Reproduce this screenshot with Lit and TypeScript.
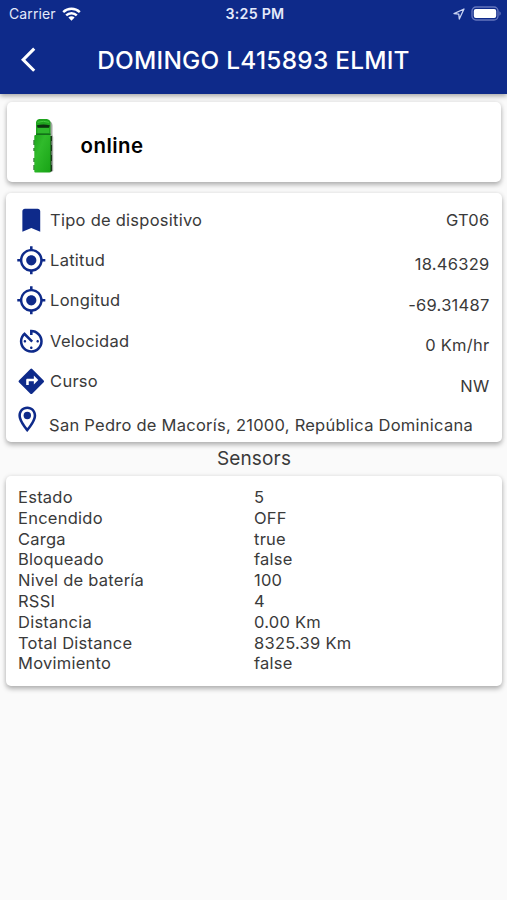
import { LitElement, html, css, svg, nothing } from "lit";
import { customElement, property } from "lit/decorators.js";

const ICONS: Record<string, string> = {
  back: "M11.67 3.87 9.9 2.1 0 12l9.9 9.9 1.77-1.77L3.54 12z",
  bookmark: "M17 3H7c-1.1 0-2 .9-2 2v16l7-3 7 3V5c0-1.1-.9-2-2-2z",
  gps: "M12 8c-2.21 0-4 1.79-4 4s1.79 4 4 4 4-1.79 4-4-1.79-4-4-4zm8.94 3A8.994 8.994 0 0 0 13 3.06V1h-2v2.06A8.994 8.994 0 0 0 3.06 11H1v2h2.06A8.994 8.994 0 0 0 11 20.94V23h2v-2.06A8.994 8.994 0 0 0 20.94 13H23v-2h-2.06zM12 19c-3.87 0-7-3.13-7-7s3.13-7 7-7 7 3.13 7 7-3.13 7-7 7z",
  timer: "M11 17c0 .55.45 1 1 1s1-.45 1-1-.45-1-1-1-1 .45-1 1zm0-14v4h2V5.08c3.39.49 6 3.39 6 6.92 0 3.87-3.13 7-7 7s-7-3.13-7-7c0-1.68.59-3.22 1.58-4.42L12 13l1.41-1.41-6.8-6.8v.02C4.42 6.45 3 9.05 3 12c0 4.97 4.02 9 9 9a9 9 0 0 0 0-18h-1zm7 9c0-.55-.45-1-1-1s-1 .45-1 1 .45 1 1 1 1-.45 1-1zM6 12c0 .55.45 1 1 1s1-.45 1-1-.45-1-1-1-1 .45-1 1z",
  directions: "M21.71 11.29l-9-9a.996.996 0 0 0-1.41 0l-9 9a.996.996 0 0 0 0 1.41l9 9c.39.39 1.02.39 1.41 0l9-9a.996.996 0 0 0 0-1.41zM14 14.5V12h-4v3H8v-4c0-.55.45-1 1-1h5V7.5l3.5 3.5-3.5 3.5z",
  place: "M12 2C8.13 2 5 5.13 5 9c0 5.25 7 13 7 13s7-7.75 7-13c0-3.87-3.13-7-7-7zM7 9c0-2.76 2.24-5 5-5s5 2.24 5 5c0 2.88-2.88 7.19-5 9.88C9.92 16.21 7 11.85 7 9z",
};

@customElement("app-icon")
class AppIcon extends LitElement {
  @property() name = "";
  static styles = css`
    :host { display: block; flex: none; width: 30.6px; height: 30.6px; }
    svg { display: block; width: 100%; height: 100%; fill: currentColor; }
  `;
  render() {
    return html`<svg viewBox="0 0 24 24">
      <path d=${ICONS[this.name]}></path>
      ${this.name === "place" ? svg`<circle cx="12" cy="9" r="2.9"></circle>` : nothing}
    </svg>`;
  }
}

@customElement("status-bar")
class StatusBar extends LitElement {
  static styles = css`
    :host { display: grid; grid-template-columns: 1fr auto 1fr; align-items: center; height: 27px; padding: 0 6px 0 9px; color: #e4e9fa; font-size: 14px; letter-spacing: 0.1px; }
    .left, .right { display: flex; align-items: center; }
    .left { gap: 6px; }
    .right { justify-content: flex-end; gap: 6px; }
    .time { font-size: 14.2px; font-weight: 600; letter-spacing: 0.25px; }
    svg { display: block; }
  `;
  render() {
    return html`
      <div class="left">
        <span>Carrier</span>
        <svg width="19" height="14" viewBox="0 0 19 14" fill="none" stroke="#fff" stroke-width="2.4">
          <path d="M1.2 5.2a11.8 11.8 0 0 1 16.6 0"></path>
          <path d="M4.2 8.4a7.5 7.5 0 0 1 10.6 0"></path>
          <path d="M9.5 13.7 6.4 10.5a4.4 4.4 0 0 1 6.2 0z" fill="#fff" stroke="none"></path>
        </svg>
      </div>
      <span class="time">3:25 PM</span>
      <div class="right">
        <svg width="12" height="12" viewBox="0 0 12 12" fill="none" stroke="#c9d3f3" stroke-width="1.3" stroke-linejoin="round">
          <path d="M11 1 1 5.6l4.8.6.5 4.8z"></path>
        </svg>
        <svg width="30" height="15" viewBox="0 0 30 15">
          <rect x="1" y="1" width="26" height="13" rx="4" fill="none" stroke="#6475bd" stroke-width="1.3"></rect>
          <rect x="2.8" y="2.9" width="22.4" height="9.2" rx="2" fill="#fff"></rect>
          <path d="M28.4 5.3c1.8.8 1.8 3.6 0 4.4z" fill="#6475bd"></path>
        </svg>
      </div>`;
  }
}

@customElement("truck-picture")
class TruckPicture extends LitElement {
  static styles = css`
    :host, svg { display: block; }
  `;
  render() {
    return html`<svg width="24" height="56" viewBox="0 0 24 56">
      <defs>
        <linearGradient id="g" x1="0" y1="0" x2="1" y2="1">
          <stop offset="0" stop-color="#1fa51d"></stop><stop offset=".35" stop-color="#30bb2b"></stop><stop offset="1" stop-color="#18a316"></stop>
        </linearGradient>
      </defs>
      <path d="M17 2.5q4.5 1 4.5 5V17l.7 2v34l-3 1.5z" fill="#a3a9a3"></path>
      <path d="M19 18h2v5h-.5v4h.5v6h-.5v4h.5v6h-.5v4h.5v6l-2 1z" fill="#183a18"></path>
      <path d="M2.3 22h2v5h-2zM2.3 30h2v3h-2zM2.3 40h2v4h-2zM2.3 47h2v5h-2z" fill="#3f7545"></path>
      <path d="M5 4Q5.500 1.500 8 1h8Q19 1.500 19.500 4v13.500H5z" fill="#1fa31e"></path>
      <path d="M5.800 7.300q6.500-1.500 13 0l-.8 2.400H6.600z" fill="#0c3010"></path>
      <path d="M6.500 4.300q6-2 11.500 0" stroke="#43c83d" fill="none"></path>
      <path d="M6.500 10h11.500v5H6.500z" fill="#2fb82c"></path>
      <path d="M5 15.500h14.500v1.500H5z" fill="#14701a"></path>
      <rect x="3.300" y="17" width="16.200" height="37.500" rx="1" fill="url(#g)"></rect>
    </svg>`;
  }
}

const DETAILS = [
  ["bookmark", "Tipo de dispositivo", "GT06", "type"],
  ["gps", "Latitud", "18.46329", ""],
  ["gps", "Longitud", "-69.31487", ""],
  ["timer", "Velocidad", "0 Km/hr", ""],
  ["directions", "Curso", "NW", ""],
];

const SENSORS = [
  ["Estado", "5"],
  ["Encendido", "OFF"],
  ["Carga", "true"],
  ["Bloqueado", "false"],
  ["Nivel de batería", "100"],
  ["RSSI", "4"],
  ["Distancia", "0.00 Km"],
  ["Total Distance", "8325.39 Km"],
  ["Movimiento", "false"],
];

@customElement("app-root")
class AppRoot extends LitElement {
  static styles = css`
    :host { display: block; height: 900px; overflow: hidden; background: #fafafa; color: #3a3a3a; font-family: Inter, "Liberation Sans", sans-serif; font-size: 16.5px; letter-spacing: 0.25px; }
    * { box-sizing: border-box; }
    header { height: 94px; background: #0e2a8a; color: #fff; box-shadow: 0 2px 5px rgba(0, 0, 0, 0.35); }
    .bar { display: grid; grid-template-columns: 57px 1fr 57px; align-items: center; height: 66px; }
    .back { width: 29.4px; height: 29.4px; margin-left: 20.5px; }
    h1 { margin: 0; text-align: center; font-size: 24.4px; font-weight: 500; line-height: 30px; white-space: nowrap; }
    .card { background: #fff; border-radius: 5px; box-shadow: 0 3px 5px rgba(0, 0, 0, 0.27), 0 0 5px rgba(0, 0, 0, 0.09); }
    .status { display: flex; align-items: center; gap: 26px; height: 80px; margin: 8px 6px 0 7px; padding: 7px 23.5px 0; }
    .status b { margin-top: -1px; color: #000; font-size: 20.4px; font-weight: 600; letter-spacing: 0.5px; }
    .details { height: 249px; margin: 11px 5px 0 6px; padding: 11.5px 12.5px 0 9.5px; }
    .row { display: flex; align-items: flex-start; height: 40.4px; line-height: 30px; white-space: nowrap; }
    app-icon { color: #0e2a8a; }
    .bar app-icon { color: #fff; }
    .label { flex: 1; margin-left: 4px; }
    .value { margin-top: 4.5px; }
    .type .value { margin-top: 0; }
    .address { margin-left: 6.5px; margin-top: 6px; }
    .place { height: 34px; margin-left: -3.5px; margin-top: -2.5px; }
    h2 { margin: 0; height: 34px; line-height: 34px; padding-left: 1px; text-align: center; font-size: 19px; font-weight: 400; letter-spacing: 0.15px; }
    .sensors { height: 210px; margin: 0 5px 0 6px; padding: 11px 12px; }
    .sensor { display: grid; grid-template-columns: 236px 1fr; height: 20.8px; line-height: 20.8px; }
  `;
  render() {
    return html`
      <header>
        <status-bar></status-bar>
        <div class="bar">
          <app-icon class="back" name="back"></app-icon>
          <h1>DOMINGO L415893 ELMIT</h1>
        </div>
      </header>
      <section class="card status"><truck-picture></truck-picture><b>online</b></section>
      <section class="card details">
        ${DETAILS.map(([icon, label, value, kind]) => html`
          <div class="row ${kind}">
            <app-icon name=${icon}></app-icon>
            <span class="label">${label}</span>
            <span class="value">${value}</span>
          </div>`)}
        <div class="row place">
          <app-icon name="place"></app-icon>
          <span class="address">San Pedro de Macorís, 21000, República Dominicana</span>
        </div>
      </section>
      <h2>Sensors</h2>
      <section class="card sensors">
        ${SENSORS.map(([name, value]) => html`<div class="sensor"><span>${name}</span><span>${value}</span></div>`)}
      </section>`;
  }
}
